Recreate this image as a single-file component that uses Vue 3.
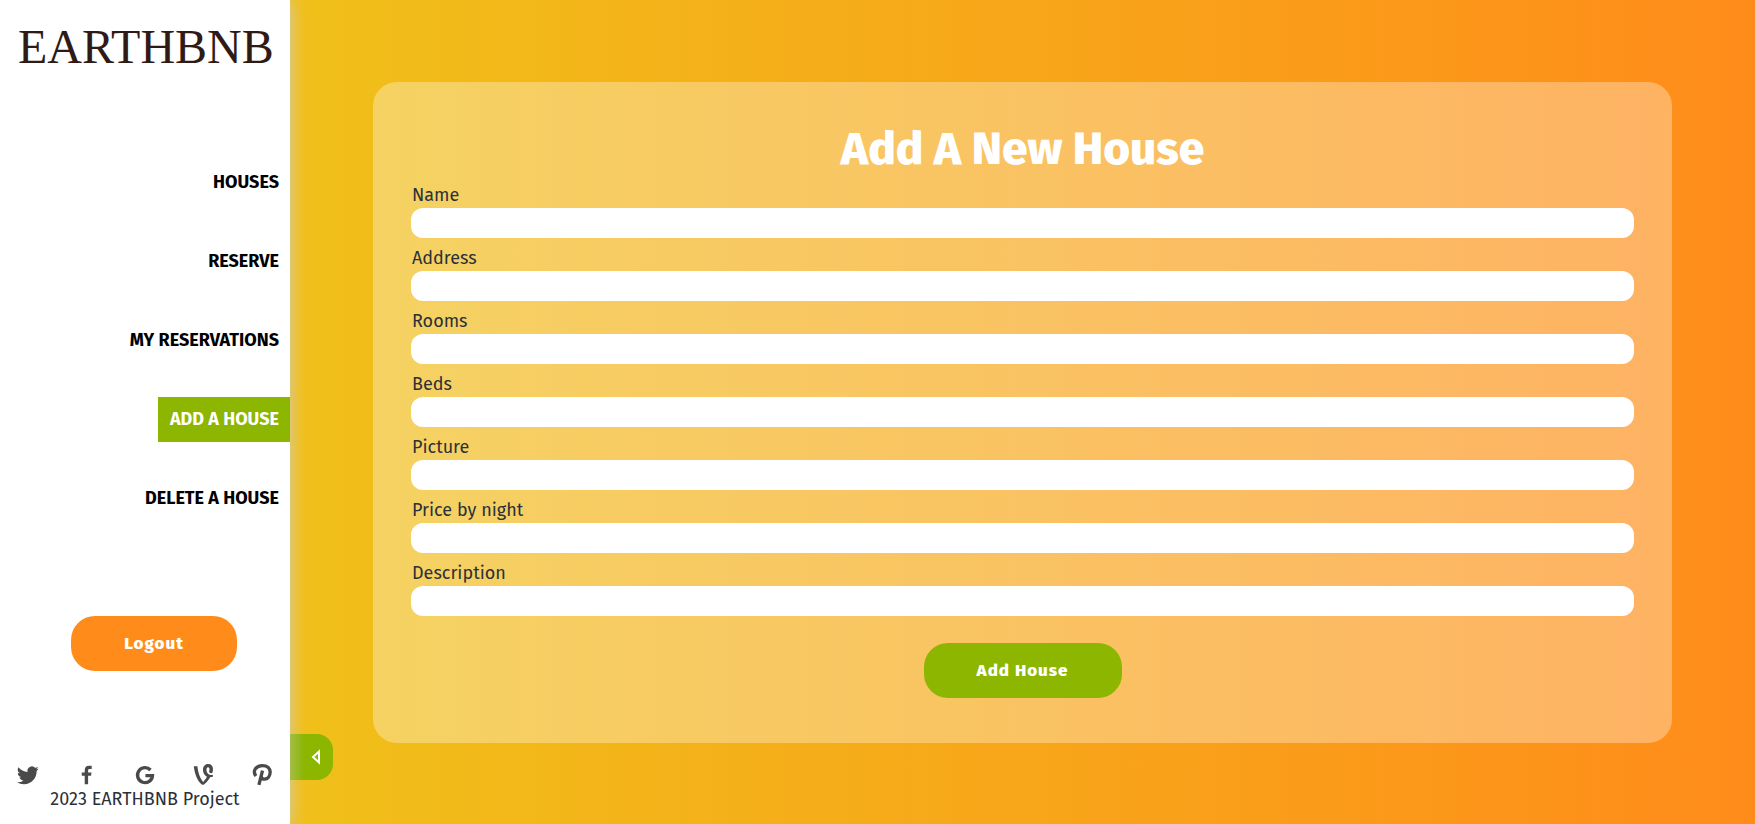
<script setup>
import { ref } from 'vue'

const links = ['HOUSES', 'RESERVE', 'MY RESERVATIONS', 'ADD A HOUSE', 'DELETE A HOUSE']
const active = ref('ADD A HOUSE')

const fields = ref([
  { id: 'name', label: 'Name', value: '' },
  { id: 'address', label: 'Address', value: '' },
  { id: 'rooms', label: 'Rooms', value: '' },
  { id: 'beds', label: 'Beds', value: '' },
  { id: 'picture', label: 'Picture', value: '' },
  { id: 'price', label: 'Price by night', value: '' },
  { id: 'description', label: 'Description', value: '' },
])

const socials = [
  {
    name: 'Twitter',
    d: 'M23.6 4.900a9.400 9.400 0 0 1-2.800.8 4.800 4.800 0 0 0 2.100-2.700 9.600 9.600 0 0 1-3.100 1.200 4.850 4.850 0 0 0-8.300 4.400A13.800 13.800 0 0 1 1.600 3.600a4.850 4.850 0 0 0 1.500 6.500 4.800 4.800 0 0 1-2.200-.6v.1a4.850 4.850 0 0 0 3.900 4.800 4.900 4.900 0 0 1-2.200.1 4.850 4.850 0 0 0 4.500 3.400A9.800 9.800 0 0 1 0 19.900a13.800 13.800 0 0 0 7.500 2.200c9 0 13.900-7.400 13.900-13.900v-.6a9.900 9.900 0 0 0 2.200-2.700z',
  },
  {
    name: 'Facebook',
    d: 'M13.200 22v-9.200h3.200l.5-3.500h-3.700V7.100c0-1.100.4-1.700 1.900-1.700h2V2.200c-.4-.1-1.500-.2-2.900-.2-2.900 0-4.700 1.700-4.700 4.700v2.600H6.300v3.500h3.200V22z',
  },
  {
    name: 'Google',
    line: true,
    d: 'M18.600 6A9 9 0 1 0 21 12.700h-8.500',
  },
  {
    name: 'Vine',
    d: 'M21.700 11.800c-.6.100-1.200.2-1.700.2-3 0-5.300-2.100-5.300-5.700 0-1.800.7-2.700 1.700-2.700 1 0 1.600.8 1.600 2.500 0 1-.3 2-.5 2.700 0 0 1 1.600 3.500 1.100.5-1.200.8-2.700.8-4.100C21.800 2.200 19.900 0 16.500 0 13 0 10.900 2.700 10.900 6.200c0 3.500 1.600 6.200 4.300 7.600-1.100 2.200-2.600 4.200-4.100 5.700C8.300 16.200 5.800 11.700 4.800 2.500H.8c1.900 14.300 7.400 18.900 8.900 19.800.8.500 1.500.5 2.300 0 1.200-.7 4.900-4.300 6.900-8 .9 0 1.900-.1 2.800-.3z',
  },
  {
    name: 'Pinterest',
    line: true,
    d: 'M4.800 13.200C0 7 5 .7 12.500.7c6 0 9.300 3.700 9.300 7.800 0 5-3 8.500-6.700 8.500-2 0-3.600-1-4-2.800M12.600 6.800 8.300 23.800',
  },
]
</script>

<template>
  <div class="page">
    <aside class="sidebar">
      <div class="logo">EARTHBNB</div>
      <nav class="nav">
        <a
          v-for="link in links"
          :key="link"
          href="#"
          class="nav-link"
          :class="{ active: link === active }"
          @click.prevent="active = link"
        >{{ link }}</a>
      </nav>
      <button type="button" class="button logout">Logout</button>
      <footer class="footer">
        <div class="socials">
          <a v-for="s in socials" :key="s.name" href="#" :aria-label="s.name">
            <svg viewBox="0 0 24 24" :class="{ line: s.line }"><path :d="s.d" /></svg>
          </a>
        </div>
        <small class="copyright">2023 EARTHBNB Project</small>
      </footer>
      <button type="button" class="toggle" aria-label="Hide menu">
        <svg viewBox="0 0 12 16"><path d="M9 2.500v11L3 8z" /></svg>
      </button>
    </aside>

    <main class="main">
      <form class="card" @submit.prevent>
        <h1 class="title">Add A New House</h1>
        <div v-for="field in fields" :key="field.id" class="field">
          <label :for="field.id">{{ field.label }}</label>
          <input :id="field.id" v-model="field.value" type="text" />
        </div>
        <button type="submit" class="button submit">Add House</button>
      </form>
    </main>
  </div>
</template>

<style>
body {
  margin: 0;
}
</style>

<style scoped>
.page {
  display: flex;
  min-height: 100vh;
  font-family: "Fira Sans", "Noto Sans", sans-serif;
  color: #2c3038;
  background: #fff;
}

.sidebar {
  position: relative;
  z-index: 1;
  display: flex;
  flex-direction: column;
  flex: 0 0 290px;
  box-sizing: border-box;
  background: #fff;
  box-shadow: 0 0 16px #ccc;
}

.logo {
  padding: 20px 0 0 18px;
  font-family: "Liberation Serif", serif;
  font-size: 48px;
  line-height: 54px;
  color: #301a15;
}

.nav {
  display: flex;
  flex-direction: column;
  align-items: flex-end;
  gap: 34px;
  margin-top: 86px;
}

.nav-link {
  padding: 0 11px 0 12px;
  font-size: 18px;
  font-weight: 700;
  line-height: 45px;
  color: #000;
  text-decoration: none;
}

.nav-link.active {
  color: #fff;
  background: #8cb600;
}

.button {
  height: 55px;
  padding: 0;
  border: 0;
  border-radius: 24px;
  font-family: inherit;
  font-size: 17px;
  font-weight: 800;
  letter-spacing: 1px;
  color: #fff;
  cursor: pointer;
}

.logout {
  width: 166px;
  margin: 95px 0 0 71px;
  background: #ff8c1a;
}

.footer {
  margin-top: auto;
  padding: 0 16px 14px;
  text-align: center;
}

.socials {
  display: flex;
  justify-content: space-between;
}

.socials a {
  display: flex;
  width: 24px;
  height: 24px;
  align-items: center;
  justify-content: center;
}

.socials svg {
  width: 22px;
  height: 22px;
  overflow: visible;
  fill: #4a4a4a;
}

.socials svg.line {
  width: 20px;
  height: 20px;
  fill: none;
  stroke: #4a4a4a;
  stroke-width: 4;
}

.copyright {
  display: block;
  font-size: 18px;
  line-height: 24px;
}

.toggle {
  position: absolute;
  z-index: -1;
  bottom: 45px;
  left: 100%;
  display: flex;
  align-items: center;
  justify-content: center;
  width: 43px;
  height: 46px;
  padding: 0 0 0 8px;
  border: 0;
  border-radius: 0 16px 16px 0;
  background: linear-gradient(to right, #a3bd4a, #8cb600 14px);
  cursor: pointer;
}

.toggle svg {
  width: 12px;
  height: 16px;
  fill: none;
  stroke: #fff;
  stroke-width: 2;
}

.main {
  flex: 1;
  padding: 82px 83px;
  background: linear-gradient(to right, #f0c019, #ff8c1a);
}

.card {
  display: flex;
  flex-direction: column;
  padding: 40px 38px 45px;
  border-radius: 24px;
  background: rgba(255, 255, 255, 0.32);
}

.title {
  margin: 0;
  font-size: 46px;
  font-weight: 800;
  line-height: 54px;
  text-align: center;
  color: #fff;
}

.field {
  display: flex;
  flex-direction: column;
}

.field label {
  padding: 7px 0 1px 1px;
  font-size: 18px;
  line-height: 24px;
}

.field input {
  height: 30px;
  box-sizing: border-box;
  margin-bottom: 1px;
  padding: 0 12px;
  border: 0;
  border-radius: 12px;
  font: inherit;
  background: #fff;
}

.submit {
  align-self: center;
  width: 198px;
  margin-top: 26px;
  background: #8cb600;
}
</style>
